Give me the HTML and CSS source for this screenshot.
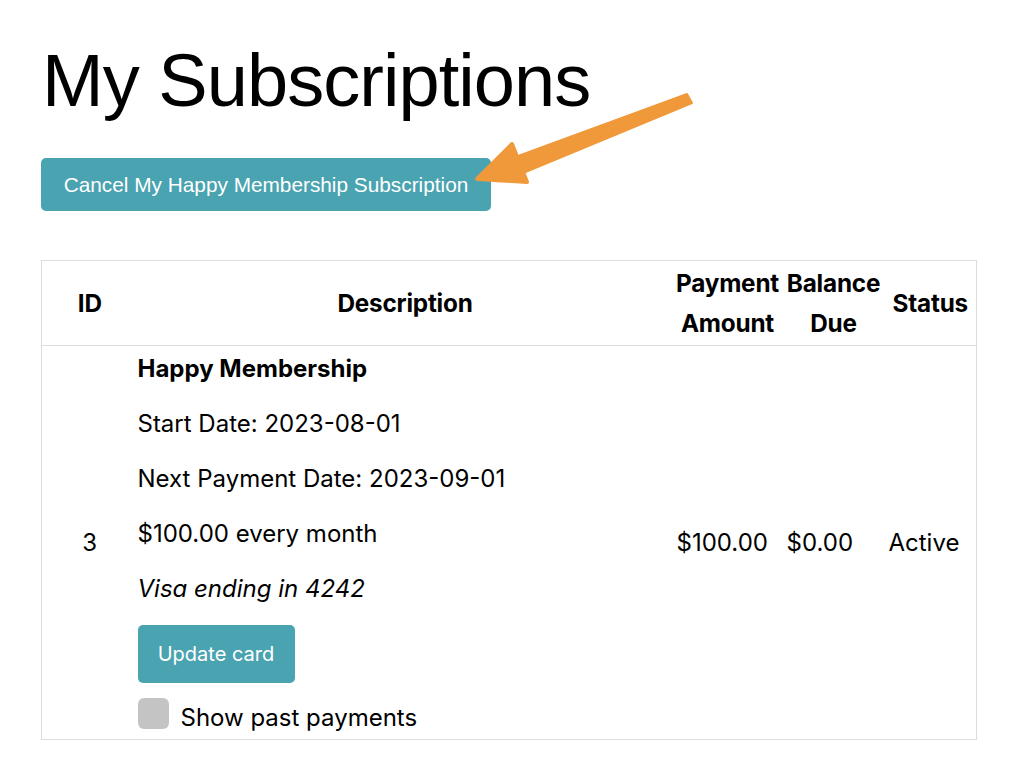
FILE: index.html
```html
<!DOCTYPE html>
<html>
<head>
<meta charset="utf-8">
<link rel="stylesheet" href="styles.css">
</head>
<body>
<div class="page">
  <h1 class="title">My Subscriptions</h1>
  <div class="actions">
    <button class="btn btn-cancel">Cancel My Happy Membership Subscription</button>
  </div>
  <table class="subs">
    <colgroup>
      <col class="c-id"><col class="c-desc"><col class="c-pay"><col class="c-bal"><col class="c-status">
    </colgroup>
    <thead>
      <tr>
        <th>ID</th>
        <th>Description</th>
        <th>Payment Amount</th>
        <th>Balance Due</th>
        <th>Status</th>
      </tr>
    </thead>
    <tbody>
      <tr>
        <td class="id">3</td>
        <td class="desc">
          <p class="name">Happy Membership</p>
          <p>Start Date: 2023-08-01</p>
          <p>Next Payment Date: 2023-09-01</p>
          <p>$100.00 every month</p>
          <p class="card"><em>Visa ending in 4242</em></p>
          <button class="btn btn-update">Update card</button>
          <label class="past"><input type="checkbox" class="chk"><span>Show past payments</span></label>
        </td>
        <td class="val">$100.00</td>
        <td class="val">$0.00</td>
        <td class="val">Active</td>
      </tr>
    </tbody>
  </table>
  <svg class="arrow" width="1024" height="766" viewBox="0 0 1024 766">
    <polygon points="510,159 523,173 692,103 687,94" fill="#f0993a" stroke="#f0993a" stroke-width="2" stroke-linejoin="round"/>
    <polygon points="477,179 512,144 527,182" fill="#f0993a" stroke="#f0993a" stroke-width="4" stroke-linejoin="round"/>
  </svg>
</div>
</body>
</html>
```

FILE: styles.css
```css
html, body {
  margin: 0;
  padding: 0;
  background: #ffffff;
}
body {
  font-family: Inter, "Liberation Sans", sans-serif;
  color: #111111;
}
.page {
  position: relative;
  padding: 38px 48px 0 41px;
}
.title {
  margin: 0 0 0 1px;
  font-family: "Liberation Sans", Arial, sans-serif;
  font-weight: 400;
  font-size: 74px;
  line-height: 86px;
  letter-spacing: -0.95px;
  color: #000;
}
.actions {
  margin-top: 34px;
}
.btn {
  background: #4aa3b0;
  color: #ffffff;
  border: none;
  border-radius: 5px;
  cursor: pointer;
}
.btn-cancel {
  height: 53px;
  width: 450px;
  font-family: "Liberation Sans", Arial, sans-serif;
  font-size: 20.8px;
  padding: 0;
}
.subs {
  margin-top: 49px;
  width: 935px;
  table-layout: fixed;
  border-collapse: collapse;
  border: 1px solid #dddddd;
}
.c-id { width: 96px; }
.c-desc { width: 535px; }
.c-pay { width: 110px; }
.c-bal { width: 102px; }
.c-status { width: 92px; }
.subs th {
  font-weight: 700;
  font-size: 24.3px;
  line-height: 40px;
  padding: 2px 0 2px 0;
  text-align: center;
  vertical-align: middle;
  border-bottom: 1px solid #dddddd;
  color: #000;
  letter-spacing: -0.2px;
}
.subs td {
  font-size: 24px;
  line-height: 33px;
  vertical-align: middle;
  color: #000;
}
.subs td.id {
  text-align: center;
}
.subs td.desc {
  padding: 6px 0 10px 0;
}
.subs td.val {
  padding-left: 4px;
  white-space: nowrap;
}
.desc p {
  margin: 0 0 22px 0;
}
.desc p.name {
  font-weight: 700;
}
.desc p.card {
  margin-bottom: 20px;
}
.btn-update {
  display: block;
  height: 58px;
  width: 157px;
  font-family: Inter, "Liberation Sans", sans-serif;
  font-size: 20px;
  padding: 0;
}
.past {
  display: flex;
  align-items: center;
  gap: 12px;
  margin-top: 15px;
  font-size: 24px;
  line-height: 31px;
}
.chk {
  appearance: none;
  -webkit-appearance: none;
  margin: 0;
  width: 31px;
  height: 31px;
  border-radius: 6px;
  background: #c4c4c4;
  border: none;
}
.past span {
  position: relative;
  top: 4px;
}
.arrow {
  position: absolute;
  left: 0;
  top: 0;
  pointer-events: none;
}
```
